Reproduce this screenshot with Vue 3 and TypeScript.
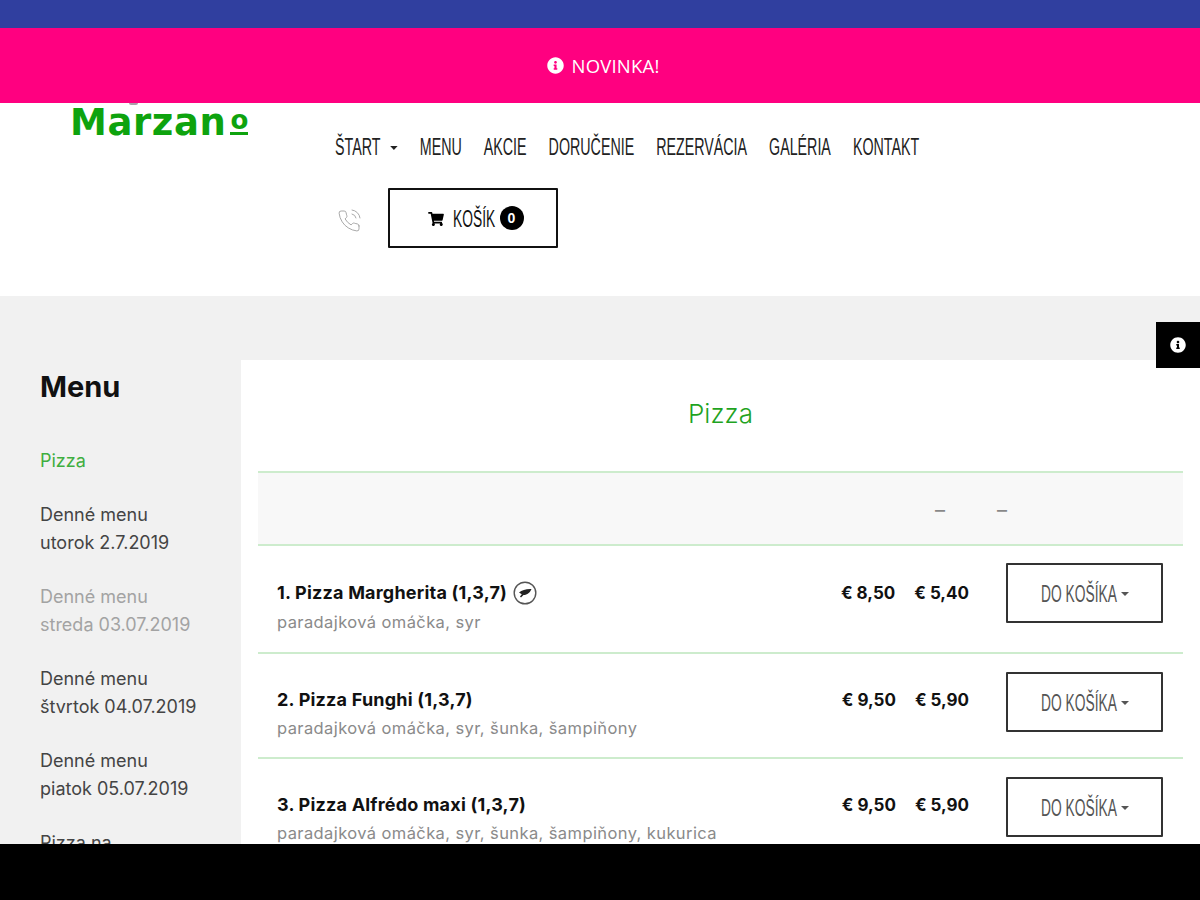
<script setup lang="ts">
const navItems = ["MENU", "AKCIE", "DORUČENIE", "REZERVÁCIA", "GALÉRIA", "KONTAKT"];

const sideItems = [
  { lines: ["Pizza"], kind: "active" },
  { lines: ["Denné menu", "utorok 2.7.2019"], kind: "" },
  { lines: ["Denné menu", "streda 03.07.2019"], kind: "muted" },
  { lines: ["Denné menu", "štvrtok 04.07.2019"], kind: "" },
  { lines: ["Denné menu", "piatok 05.07.2019"], kind: "" },
  { lines: ["Pizza na"], kind: "" },
];

const pizzas = [
  { name: "1. Pizza Margherita (1,3,7)", desc: "paradajková omáčka, syr", priceA: "€ 8,50", priceB: "€ 5,40", veg: true },
  { name: "2. Pizza Funghi (1,3,7)", desc: "paradajková omáčka, syr, šunka, šampiňony", priceA: "€ 9,50", priceB: "€ 5,90", veg: false },
  { name: "3. Pizza Alfrédo maxi (1,3,7)", desc: "paradajková omáčka, syr, šunka, šampiňony, kukurica", priceA: "€ 9,50", priceB: "€ 5,90", veg: false },
];

const infoPath =
  "M256 8C119.043 8 8 119.083 8 256c0 136.997 111.043 248 248 248s248-111.003 248-248C504 119.083 392.957 8 256 8zm0 110c23.196 0 42 18.804 42 42s-18.804 42-42 42-42-18.804-42-42 18.804-42 42-42zm56 254c0 6.627-5.373 12-12 12h-88c-6.627 0-12-5.373-12-12v-24c0-6.627 5.373-12 12-12h12v-64h-12c-6.627 0-12-5.373-12-12v-24c0-6.627 5.373-12 12-12h64c6.627 0 12 5.373 12 12v100h12c6.627 0 12 5.373 12 12v24z";
</script>

<template>
  <div class="page">
    <div class="topbar"></div>
    <div class="notice">
      <svg class="notice-icon" viewBox="0 0 512 512"><path :d="infoPath" fill="#fff" /></svg>
      <span>NOVINKA!</span>
    </div>

    <header class="header">
      <div class="logo">Marzan<span class="logo-o">o</span></div>
      <div class="header-right">
        <nav class="nav">
          <a class="nav-item">ŠTART <i class="caret nav-caret"></i></a>
          <a v-for="item in navItems" :key="item" class="nav-item">{{ item }}</a>
        </nav>
        <div class="actions">
          <svg class="phone" viewBox="0 0 24 24" fill="none" stroke="#a9a9a9" stroke-width="1" stroke-linecap="round" stroke-linejoin="round">
            <path d="M15.05 5A5 5 0 0 1 19 8.95M15.05 1A9 9 0 0 1 23 8.94m-1 7.98v3a2 2 0 0 1-2.18 2 19.79 19.79 0 0 1-8.63-3.07 19.5 19.5 0 0 1-6-6 19.79 19.79 0 0 1-3.07-8.67A2 2 0 0 1 4.11 2h3a2 2 0 0 1 2 1.72 12.84 12.84 0 0 0 .7 2.81 2 2 0 0 1-.45 2.11L8.09 9.91a16 16 0 0 0 6 6l1.27-1.27a2 2 0 0 1 2.11-.45 12.84 12.84 0 0 0 2.81.7A2 2 0 0 1 22 16.92z" />
          </svg>
          <button class="cart">
            <svg class="cart-icon" viewBox="0 0 576 512">
              <path fill="#000" d="M528.12 301.319l47.273-208C578.806 78.301 567.391 64 551.99 64H159.208l-9.166-44.81C147.758 8.021 137.93 0 126.529 0H24C10.745 0 0 10.745 0 24v16c0 13.255 10.745 24 24 24h69.883l70.248 343.435C147.325 417.1 136 435.222 136 456c0 30.928 25.072 56 56 56s56-25.072 56-56c0-15.674-6.447-29.835-16.824-40h209.647C430.447 426.165 424 440.326 424 456c0 30.928 25.072 56 56 56s56-25.072 56-56c0-22.172-12.888-41.332-31.579-50.405l5.517-24.276c3.413-15.018-8.002-29.319-23.403-29.319H218.117l-6.545-32h293.145c11.206 0 20.92-7.754 23.403-18.681z" />
            </svg>
            <span class="cart-label"><span class="squeeze">KOŠÍK</span></span>
            <span class="badge">0</span>
          </button>
        </div>
      </div>
    </header>

    <main class="main">
      <aside class="sidebar">
        <h2 class="side-title">Menu</h2>
        <a v-for="(item, i) in sideItems" :key="i" class="side-item" :class="item.kind">
          <span v-for="line in item.lines" :key="line" class="side-line">{{ line }}</span>
        </a>
      </aside>

      <section class="content">
        <h1 class="content-title">Pizza</h1>
        <div class="table-head">
          <span class="dash">–</span>
          <span class="dash">–</span>
        </div>
        <div v-for="pizza in pizzas" :key="pizza.name" class="row">
          <div class="info">
            <div class="name" :class="{ tall: pizza.veg }">
              {{ pizza.name }}
              <svg v-if="pizza.veg" class="veg" viewBox="0 0 24 24">
                <circle cx="12" cy="12" r="10.8" fill="none" stroke="#555" stroke-width="1.4" />
                <path d="M6 11.5C9 9 13 7.8 18.5 8 17 11.5 14.500 14 10.500 14L8 16.500 7 15.500 8.800 13.200z" fill="#222" />
              </svg>
            </div>
            <div class="desc">{{ pizza.desc }}</div>
          </div>
          <div class="prices">
            <span class="price">{{ pizza.priceA }}</span>
            <span class="price">{{ pizza.priceB }}</span>
          </div>
          <button class="add">
            <span class="add-label"><span class="squeeze">DO KOŠÍKA</span></span>
            <i class="caret"></i>
          </button>
        </div>
      </section>

      <div class="info-tab">
        <svg viewBox="0 0 512 512"><path :d="infoPath" fill="#fff" /></svg>
      </div>
    </main>

    <footer class="blackbar"></footer>
  </div>
</template>

<style>
html,
body {
  margin: 0;
  background: #fff;
}
</style>

<style scoped>
.page {
  display: flex;
  flex-direction: column;
  height: 900px;
  overflow: hidden;
  font-family: Inter, "Liberation Sans", sans-serif;
  color: #111;
}

.topbar {
  height: 28px;
  background: #303f9f;
}

.notice {
  height: 75px;
  padding-left: 6px;
  box-sizing: border-box;
  background: #ff0080;
  color: #fff;
  display: flex;
  align-items: center;
  justify-content: center;
  gap: 8px;
  font-family: "Open Sans", sans-serif;
  font-size: 18.500px;
  letter-spacing: 0.2px;
}

.notice-icon {
  width: 17px;
  height: 17px;
}

.header {
  height: 193px;
  background: #fff;
  display: flex;
  overflow: hidden;
}

.logo {
  position: relative;
  width: 335px;
  flex: none;
  padding-left: 70px;
  box-sizing: border-box;
  font-family: "DejaVu Sans", sans-serif;
  font-weight: 700;
  font-size: 37px;
  letter-spacing: 0.6px;
  line-height: 40px;
  color: #0ea30e;
}

.logo::before {
  content: "";
  position: absolute;
  left: 129px;
  top: 0;
  width: 9px;
  height: 2px;
  border-radius: 0 0 4px 4px;
  background: #a9a0a8;
}

.logo-o {
  display: inline-block;
  font-size: 26px;
  line-height: 20px;
  letter-spacing: 0;
  margin-left: 4px;
  padding-bottom: 2px;
  vertical-align: 6px;
  border-bottom: 3px solid #0ea30e;
}

.nav {
  display: flex;
  align-items: center;
  gap: 35.500px;
  margin-top: 32px;
  height: 24px;
  transform: scaleX(0.62);
  transform-origin: left center;
}

.nav-item,
.squeeze {
  font-family: "Liberation Sans", sans-serif;
}

.nav-item {
  font-size: 23px;
  color: #222;
  white-space: nowrap;
}

.caret {
  display: inline-block;
  width: 0;
  height: 0;
  vertical-align: middle;
  border-top: 4px solid currentColor;
  border-left: 4px solid transparent;
  border-right: 4px solid transparent;
}

.nav-caret {
  margin-left: 10px;
  border-left-width: 6.500px;
  border-right-width: 6.500px;
}

.actions {
  display: flex;
  align-items: center;
  margin-top: 29px;
  gap: 27px;
}

.phone {
  width: 24px;
  height: 24px;
  margin-left: 2px;
  margin-top: 6px;
}

.cart {
  width: 170px;
  height: 60px;
  box-sizing: border-box;
  border: 2px solid #111;
  background: #fff;
  border-radius: 1px;
  display: flex;
  align-items: center;
  justify-content: center;
  padding: 2px 0 0 5px;
  color: #111;
}

.cart-icon {
  width: 16px;
  height: 14px;
  margin-right: 9px;
}

.cart-label,
.add-label {
  display: block;
  white-space: nowrap;
  text-align: left;
}

.cart-label {
  width: 42px;
  margin-right: 5px;
}

.add-label {
  width: 75px;
  margin-right: 5px;
}

.squeeze {
  display: inline-block;
  font-size: 23px;
  transform: scaleX(0.6);
  transform-origin: left center;
}

.badge {
  width: 24px;
  height: 24px;
  margin-top: -2px;
  border-radius: 50%;
  background: #000;
  color: #fff;
  font-family: "Liberation Sans", sans-serif;
  font-weight: 700;
  font-size: 14px;
  line-height: 24px;
  text-align: center;
}

.main {
  position: relative;
  flex: 1;
  min-height: 0;
  overflow: hidden;
  background: #f1f1f1;
  display: flex;
  padding-top: 64px;
}

.sidebar {
  width: 241px;
  flex: none;
  padding-left: 40px;
  box-sizing: border-box;
}

.side-title {
  margin: 0 0 44px;
  font-size: 29px;
  line-height: 32px;
  font-weight: 700;
  color: #111;
  padding-top: 11px;
}

.side-item {
  display: block;
  margin-bottom: 26px;
  font-size: 18px;
  line-height: 28px;
  color: #444;
}

.side-line {
  display: block;
  white-space: nowrap;
}

.side-item.active {
  color: #3fae3f;
}

.side-item.muted {
  color: #a3a3a3;
}

.content {
  flex: 1;
  background: #fff;
  padding: 0 17px;
  box-sizing: border-box;
}

.content-title {
  margin: 0;
  height: 111px;
  padding-top: 36px;
  box-sizing: border-box;
  text-align: center;
  font-size: 26px;
  line-height: 36px;
  font-weight: 300;
  color: #1fa31f;
}

.table-head {
  height: 75px;
  box-sizing: border-box;
  border-top: 2px solid #cdeccd;
  border-bottom: 2px solid #cdeccd;
  background: #f8f8f8;
  display: flex;
  align-items: center;
  justify-content: flex-end;
  gap: 52px;
  padding: 2px 176px 0 0;
  color: #888;
  font-size: 20px;
}

.row {
  display: flex;
  align-items: flex-start;
  padding: 18px 0 14px;
  border-bottom: 2px solid #cdeccd;
}

.row:nth-child(3) {
  padding-top: 17px;
  padding-bottom: 15px;
}

.row:nth-child(3) .prices {
  margin-top: 17px;
}

.info {
  flex: 1;
  padding: 15px 0 0 19px;
}

.name {
  display: flex;
  align-items: center;
  gap: 6px;
  height: 26px;
  font-size: 18px;
  line-height: 26px;
  letter-spacing: 0.2px;
  font-weight: 700;
  color: #111;
}

.name.tall {
  height: 29px;
}

.veg {
  width: 24px;
  height: 24px;
}

.desc {
  height: 30px;
  font-size: 16.500px;
  letter-spacing: 0.4px;
  line-height: 30px;
  color: #8a8a8a;
}

.prices {
  display: flex;
  gap: 19px;
  margin-top: 15px;
  margin-right: 37px;
  line-height: 26px;
}

.price {
  font-size: 17px;
  font-weight: 700;
  color: #111;
}

.add {
  display: flex;
  align-items: center;
  justify-content: center;
  width: 157px;
  height: 60px;
  box-sizing: border-box;
  border: 2px solid #333;
  border-radius: 1px;
  background: #fff;
  color: #555;
  padding: 2px 0 0;
  margin-right: 20px;
}

.info-tab {
  position: absolute;
  top: 26px;
  right: 0;
  width: 44px;
  height: 46px;
  background: #000;
  display: flex;
  align-items: center;
  justify-content: center;
}

.info-tab svg {
  width: 16px;
  height: 16px;
}

.blackbar {
  height: 56px;
  background: #000;
}
</style>
